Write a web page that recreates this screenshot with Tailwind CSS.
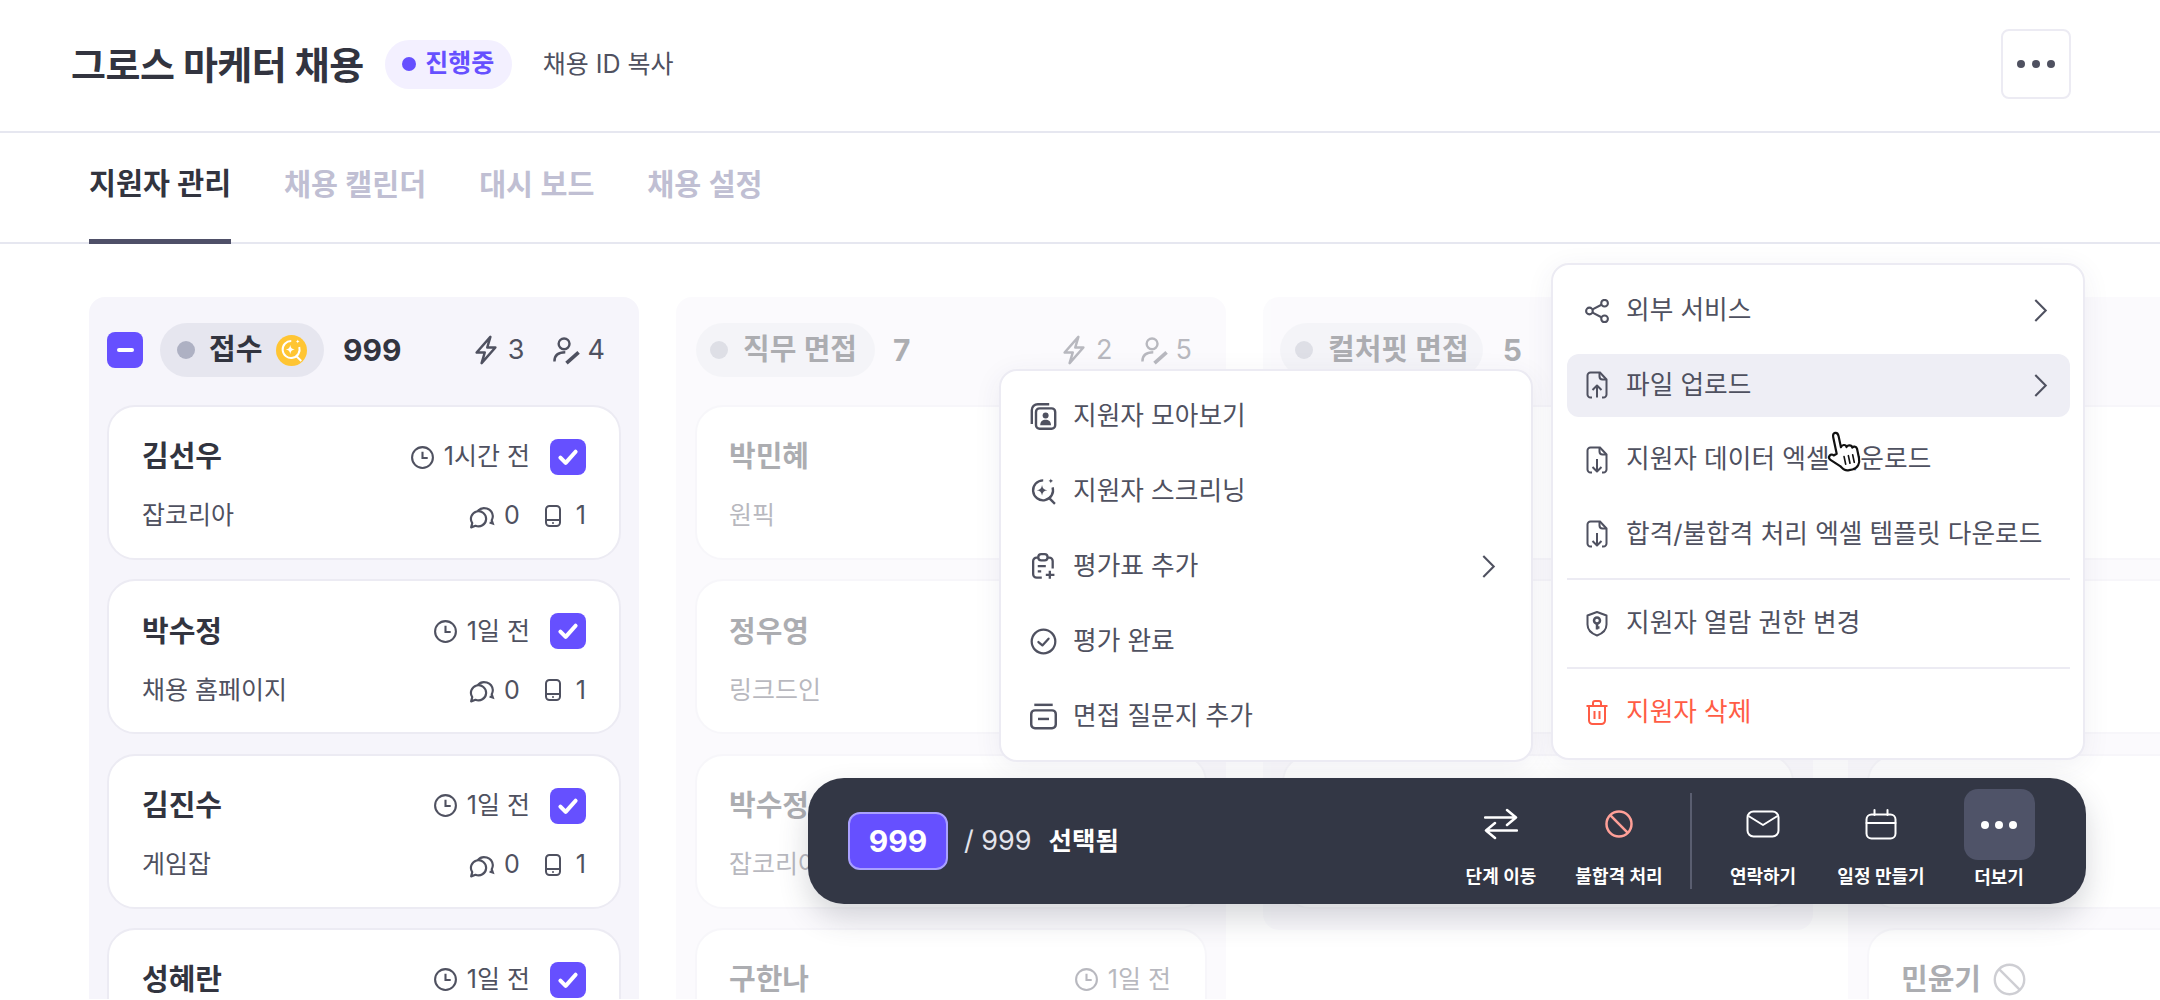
<!DOCTYPE html>
<html lang="ko">
  <head>
    <meta charset="UTF-8" />
    <title>그로스 마케터 채용</title>
    <script src="https://cdn.jsdelivr.net/npm/@tailwindcss/browser@4"></script>
  </head>
  <body class="bg-white font-['Inter','Noto_Sans_CJK_KR',sans-serif] text-[#32343f] overflow-hidden">
    <!-- Icon sprite -->
    <svg class="hidden" xmlns="http://www.w3.org/2000/svg">
      <symbol id="i-clock" viewBox="0 0 24 24"><circle cx="12" cy="12" r="10"/><path d="M12 6.500V12.500H17"/></symbol>
      <symbol id="i-zap" viewBox="0 0 24 24"><path d="M15.500 1.500 4.500 14h6.500l-2.500 8.500L19.500 10h-6.500z" stroke-linejoin="round"/></symbol>
      <symbol id="i-assign" viewBox="0 0 24 24"><circle cx="10" cy="6.500" r="4.500"/><path d="M2 21c0-4.500 3-7.500 9-7.500"/><path d="M12 22.500l10-9" stroke-width="3"/></symbol>
      <symbol id="i-chat" viewBox="0 0 24 24"><path d="M8 7.500A8 8 0 0 1 22 12c0 1.500-.4 2.800-1 4l1 3-3-1"/><path d="M2 22.500l1-4A7 7 0 1 1 6 21z" stroke-linejoin="round"/></symbol>
      <symbol id="i-phone" viewBox="0 0 24 24"><rect x="5" y="2" width="14" height="20" rx="3.500"/><path d="M5 16h14"/><circle cx="12" cy="19" r="1" fill="currentColor" stroke="none"/></symbol>
      <symbol id="i-check" viewBox="0 0 24 24"><path d="M5.500 12.500 10 17l8.500-9.500" stroke-linecap="round" stroke-linejoin="round"/></symbol>
      <symbol id="i-contacts" viewBox="1.500 0.500 21.500 22.500"><rect x="6" y="5" width="16" height="17" rx="3"/><path d="M2.500 18V6.500a5 5 0 0 1 5-5h9.500"/><circle cx="14" cy="11" r="2.500" fill="currentColor" stroke="none"/><path d="M9.500 19c0-3 2-4.500 4.500-4.500s4.500 1.500 4.500 4.500z" fill="currentColor" stroke="none"/></symbol>
      <symbol id="i-ai-search" viewBox="1 0.500 22.500 23"><path d="M12 2.500a8.500 8.500 0 1 0 8 6"/><path d="M16.500 17 22 22.500"/><path d="M11 6.500c.4 2.800 1.700 4.100 4.500 4.500-2.800.4-4.100 1.700-4.500 4.500-.4-2.800-1.700-4.100-4.500-4.500 2.800-.4 4.100-1.700 4.500-4.500z" fill="currentColor" stroke="none"/><path d="M18.500 1c.2 1.200.8 1.800 2 2-1.200.2-1.800.8-2 2-.2-1.200-.8-1.800-2-2 1.200-.2 1.800-.8 2-2z" fill="currentColor" stroke="none"/></symbol>
      <symbol id="i-clip-plus" viewBox="2 0.500 21 23.500"><path d="M8 4.500H6.500a3 3 0 0 0-3 3V19a3 3 0 0 0 3 3H11"/><path d="M16 4.500h1.500a3 3 0 0 1 3 3V14"/><rect x="8" y="1.500" width="8" height="5.500" rx="2.500"/><path d="M7.500 12h7M7.500 16.500h3M18 16v7M14.500 19.500h7.500"/></symbol>
      <symbol id="i-check-circle" viewBox="0 0 24 24"><circle cx="12" cy="12" r="10.500"/><path d="M7.500 12.500 11 15.500l5.500-6" stroke-linecap="round" stroke-linejoin="round"/></symbol>
      <symbol id="i-card-minus" viewBox="1 2 22 21"><path d="M4.500 3h15"/><rect x="2" y="7.500" width="20" height="14.500" rx="3"/><path d="M7.500 14.500h9"/></symbol>
      <symbol id="i-share" viewBox="0.500 0.500 22.500 23"><circle cx="4.500" cy="12" r="3.200"/><circle cx="19" cy="4.500" r="3.200"/><circle cx="19" cy="19.500" r="3.200"/><path d="M7.500 10.500 16 6M7.500 13.500 16 18"/></symbol>
      <symbol id="i-file-up" viewBox="0 0 24 28"><path d="M7 26.500H5.500a3 3 0 0 1-3-3v-19a3 3 0 0 1 3-3h9.500l6.500 7v15a3 3 0 0 1-3 3H17"/><path d="M14.500 2v3.500a3 3 0 0 0 3 3H21"/><path d="M12 26.500V14.500M7.500 19l4.500-4.500 4.500 4.500" stroke-linejoin="round"/></symbol>
      <symbol id="i-file-down" viewBox="0 0 24 28"><path d="M7 26.500H5.500a3 3 0 0 1-3-3v-19a3 3 0 0 1 3-3h9.500l6.500 7v15a3 3 0 0 1-3 3H17"/><path d="M14.500 2v3.500a3 3 0 0 0 3 3H21"/><path d="M12 13v12.500M7.500 21l4.500 4.500 4.500-4.500" stroke-linejoin="round"/></symbol>
      <symbol id="i-shield" viewBox="0 0 24 26"><path d="M12 1.500 21.500 5v9c0 5.500-4 9-9.500 11C6.500 23 2.500 19.500 2.500 14V5z" stroke-linejoin="round"/><circle cx="12" cy="10" r="3" stroke-width="2.500"/><path d="M12 13v6M12 17h2.500" stroke-width="2.500"/></symbol>
      <symbol id="i-trash" viewBox="0 0 24 26"><path d="M1.500 6.500h21M8 6V3.500a2 2 0 0 1 2-2h4a2 2 0 0 1 2 2V6"/><path d="M4 6.500V21a3.500 3.500 0 0 0 3.500 3.500h9A3.500 3.500 0 0 0 20 21V6.500"/><path d="M9.500 11.500v8M14.500 11.500v8"/></symbol>
      <symbol id="i-chevron" viewBox="0 0 14 24"><path d="M2 2l10 10L2 22"/></symbol>
      <symbol id="i-swap" viewBox="0 0 34 32"><path d="M1 9.500h31M23 2l9 7.500-9 7.500M33 22.500H2M11 15l-9 7.500 9 7.500" stroke-linecap="round" stroke-linejoin="round"/></symbol>
      <symbol id="i-ban" viewBox="0 0 28 28"><circle cx="14" cy="14" r="12.500"/><path d="M5.200 5.200 22.800 22.800"/></symbol>
      <symbol id="i-mail" viewBox="0 0 34 28"><rect x="1.500" y="1.500" width="31" height="25" rx="6"/><path d="M2.500 6 17 15 31.500 6" stroke-linejoin="round"/></symbol>
      <symbol id="i-calendar" viewBox="0 0 32 32"><rect x="1.500" y="6.500" width="29" height="24" rx="5"/><path d="M1.500 15h29M9.500 2v5M22.500 2v5" stroke-linecap="round"/></symbol>
    </svg>

    <!-- Page header -->
    <header class="h-[133px] border-b-2 border-[#e6e7f0] flex items-center pl-[71px] pr-[89px] pb-[3px]">
      <h1 class="text-[38px] font-bold tracking-[-0.5px] leading-none pt-[1px]">그로스 마케터 채용</h1>
      <span class="ml-[21px] h-[49px] w-[127px] rounded-full bg-[#f3f0ff] flex items-center justify-center gap-[9px] text-[#6650ff] text-[25px] font-semibold">
        <i class="size-[14px] rounded-full bg-[#6650ff]"></i>진행중
      </span>
      <button class="ml-[31px] pt-[1px] text-[25px] text-[#4f5160]">채용 ID 복사</button>
      <button class="ml-auto size-[70px] rounded-lg border-2 border-[#ecebf3] flex items-center justify-center gap-[7px]">
        <i class="size-2 rounded-full bg-[#4f5160]"></i><i class="size-2 rounded-full bg-[#4f5160]"></i><i class="size-2 rounded-full bg-[#4f5160]"></i>
      </button>
    </header>

    <!-- Tabs -->
    <nav class="h-[111px] border-b-2 border-[#e6e7f0] flex pl-[89px] gap-[53px] text-[29.300px] font-semibold text-[#c0bfd3]">
      <a class="flex items-center -mb-[2px] pb-[5px] w-[142px] whitespace-nowrap border-b-[5px] border-[#4f5068] text-[#32343f]">지원자 관리</a>
      <a class="flex items-center pb-[5px]">채용 캘린더</a>
      <a class="flex items-center pb-[5px]">대시 보드</a>
      <a class="flex items-center pb-[5px]">채용 설정</a>
    </nav>

    <!-- Board -->
    <main class="h-[755px] overflow-hidden flex items-start gap-[37px] pl-[89px] pt-[53px]">
      <!-- 접수 -->
      <section class="w-[550px] shrink-0 h-[800px] rounded-2xl bg-[#f6f5fb] px-[18px] pt-[26px]">
        <div class="h-[54px] mr-[16px] flex items-center">
          <span class="size-9 rounded-lg bg-[#6650ff] flex items-center justify-center"><i class="w-[17px] h-1 rounded-full bg-white"></i></span>
          <span class="ml-[17px] h-[54px] w-[164px] rounded-full bg-[#e6e6ef] flex items-center pl-[17px]">
            <i class="size-[18px] rounded-full bg-[#aeb1c3]"></i>
            <b class="ml-[14px] text-[29px] font-semibold">접수</b>
            <span class="ml-[14px] size-[31px] rounded-full bg-[#ffc533] flex items-center justify-center text-white"><svg class="size-[23px] fill-none stroke-current stroke-2"><use href="#i-ai-search"/></svg></span>
          </span>
          <b class="ml-[19px] text-[30px] font-bold">999</b>
          <span class="ml-auto flex items-center text-[27px] text-[#4f5160]">
            <svg class="size-[30px] fill-none stroke-current stroke-2"><use href="#i-zap"/></svg><span class="ml-[7px]">3</span>
            <svg class="ml-[27px] size-[29px] fill-none stroke-current stroke-2"><use href="#i-assign"/></svg><span class="ml-[7px]">4</span>
          </span>
        </div>
        <div class="mt-[28px] flex flex-col gap-[19.300px]">
          <article class="h-[155px] rounded-[28px] border-2 border-[#ecebf3] bg-white px-[33px] pt-[32px]">
            <div class="h-9 flex items-center"><b class="text-[29px] font-semibold">김선우</b><span class="ml-auto flex items-center gap-[9px] text-[25px] text-[#4f5160]"><svg class="size-[25px] fill-none stroke-current stroke-2"><use href="#i-clock"/></svg>1시간 전</span><span class="ml-[20px] size-9 rounded-lg bg-[#6650ff] flex items-center justify-center text-white"><svg class="size-7 fill-none stroke-current stroke-[3.5]"><use href="#i-check"/></svg></span></div>
            <div class="h-8 mt-[25px] flex items-center text-[25px] text-[#4f5160]"><span>잡코리아</span><span class="ml-auto flex items-center"><svg class="size-[26px] fill-none stroke-current stroke-2"><use href="#i-chat"/></svg><span class="ml-[9px]">0</span><svg class="ml-[21px] size-[24px] fill-none stroke-current stroke-2"><use href="#i-phone"/></svg><span class="ml-[11px]">1</span></span></div>
          </article>
          <article class="h-[155px] rounded-[28px] border-2 border-[#ecebf3] bg-white px-[33px] pt-[32px]">
            <div class="h-9 flex items-center"><b class="text-[29px] font-semibold">박수정</b><span class="ml-auto flex items-center gap-[9px] text-[25px] text-[#4f5160]"><svg class="size-[25px] fill-none stroke-current stroke-2"><use href="#i-clock"/></svg>1일 전</span><span class="ml-[20px] size-9 rounded-lg bg-[#6650ff] flex items-center justify-center text-white"><svg class="size-7 fill-none stroke-current stroke-[3.5]"><use href="#i-check"/></svg></span></div>
            <div class="h-8 mt-[25px] flex items-center text-[25px] text-[#4f5160]"><span>채용 홈페이지</span><span class="ml-auto flex items-center"><svg class="size-[26px] fill-none stroke-current stroke-2"><use href="#i-chat"/></svg><span class="ml-[9px]">0</span><svg class="ml-[21px] size-[24px] fill-none stroke-current stroke-2"><use href="#i-phone"/></svg><span class="ml-[11px]">1</span></span></div>
          </article>
          <article class="h-[155px] rounded-[28px] border-2 border-[#ecebf3] bg-white px-[33px] pt-[32px]">
            <div class="h-9 flex items-center"><b class="text-[29px] font-semibold">김진수</b><span class="ml-auto flex items-center gap-[9px] text-[25px] text-[#4f5160]"><svg class="size-[25px] fill-none stroke-current stroke-2"><use href="#i-clock"/></svg>1일 전</span><span class="ml-[20px] size-9 rounded-lg bg-[#6650ff] flex items-center justify-center text-white"><svg class="size-7 fill-none stroke-current stroke-[3.5]"><use href="#i-check"/></svg></span></div>
            <div class="h-8 mt-[25px] flex items-center text-[25px] text-[#4f5160]"><span>게임잡</span><span class="ml-auto flex items-center"><svg class="size-[26px] fill-none stroke-current stroke-2"><use href="#i-chat"/></svg><span class="ml-[9px]">0</span><svg class="ml-[21px] size-[24px] fill-none stroke-current stroke-2"><use href="#i-phone"/></svg><span class="ml-[11px]">1</span></span></div>
          </article>
          <article class="h-[155px] rounded-[28px] border-2 border-[#ecebf3] bg-white px-[33px] pt-[32px]">
            <div class="h-9 flex items-center"><b class="text-[29px] font-semibold">성혜란</b><span class="ml-auto flex items-center gap-[9px] text-[25px] text-[#4f5160]"><svg class="size-[25px] fill-none stroke-current stroke-2"><use href="#i-clock"/></svg>1일 전</span><span class="ml-[20px] size-9 rounded-lg bg-[#6650ff] flex items-center justify-center text-white"><svg class="size-7 fill-none stroke-current stroke-[3.5]"><use href="#i-check"/></svg></span></div>
          </article>
        </div>
      </section>

      <!-- 직무 면접 (dimmed) -->
      <section class="opacity-40 w-[550px] shrink-0 h-[800px] rounded-2xl bg-[#f6f5fb] px-[19px] pt-[26px]">
        <div class="h-[54px] ml-[1px] mr-[15px] flex items-center">
          <span class="h-[54px] rounded-full bg-[#e6e6ef] flex items-center pl-[14px] pr-[18px]">
            <i class="size-[18px] rounded-full bg-[#aeb1c3]"></i>
            <b class="ml-[15px] text-[29px] font-semibold whitespace-nowrap">직무 면접</b>
          </span>
          <b class="ml-[18px] text-[30px] font-bold">7</b>
          <span class="ml-auto flex items-center text-[27px] text-[#4f5160]">
            <svg class="size-[30px] fill-none stroke-current stroke-2"><use href="#i-zap"/></svg><span class="ml-[7px]">2</span>
            <svg class="ml-[27px] size-[29px] fill-none stroke-current stroke-2"><use href="#i-assign"/></svg><span class="ml-[7px]">5</span>
          </span>
        </div>
        <div class="mt-[28px] flex flex-col gap-[19.300px]">
          <article class="h-[155px] rounded-[28px] border-2 border-[#ecebf3] bg-white px-[32px] pt-[32px]">
            <div class="h-9 flex items-center"><b class="text-[29px] font-semibold">박민혜</b></div>
            <div class="h-8 mt-[25px] flex items-center text-[25px] text-[#4f5160]">원픽</div>
          </article>
          <article class="h-[155px] rounded-[28px] border-2 border-[#ecebf3] bg-white px-[32px] pt-[32px]">
            <div class="h-9 flex items-center"><b class="text-[29px] font-semibold">정우영</b></div>
            <div class="h-8 mt-[25px] flex items-center text-[25px] text-[#4f5160]">링크드인</div>
          </article>
          <article class="h-[155px] rounded-[28px] border-2 border-[#ecebf3] bg-white px-[32px] pt-[32px]">
            <div class="h-9 flex items-center"><b class="text-[29px] font-semibold">박수정</b></div>
            <div class="h-8 mt-[25px] flex items-center text-[25px] text-[#4f5160]">잡코리아</div>
          </article>
          <article class="h-[155px] rounded-[28px] border-2 border-[#ecebf3] bg-white pl-[32px] pr-[34px] pt-[32px]">
            <div class="h-9 flex items-center"><b class="text-[29px] font-semibold">구한나</b><span class="ml-auto flex items-center gap-[9px] text-[25px] text-[#4f5160]"><svg class="size-[25px] fill-none stroke-current stroke-2"><use href="#i-clock"/></svg>1일 전</span></div>
          </article>
        </div>
      </section>

      <!-- 컬처핏 면접 (dimmed) -->
      <section class="opacity-40 w-[550px] shrink-0 rounded-2xl bg-[#f6f5fb] px-[19px] pt-[26px] pb-[21px]">
        <div class="h-[54px] -ml-[2px] flex items-center">
          <span class="h-[54px] rounded-full bg-[#e6e6ef] flex items-center pl-[15px] pr-[14px]">
            <i class="size-[18px] rounded-full bg-[#aeb1c3]"></i>
            <b class="ml-[15px] text-[29px] font-semibold whitespace-nowrap">컬처핏 면접</b>
          </span>
          <b class="ml-[20px] text-[30px] font-bold">5</b>
        </div>
        <div class="mt-[28px] flex flex-col gap-[19.300px]">
          <article class="h-[155px] rounded-[28px] border-2 border-[#ecebf3] bg-white"></article>
          <article class="h-[155px] rounded-[28px] border-2 border-[#ecebf3] bg-white"></article>
          <article class="h-[155px] rounded-[28px] border-2 border-[#ecebf3] bg-white"></article>
        </div>
      </section>

      <!-- Fourth column (dimmed, runs off the page) -->
      <section class="opacity-40 -ml-[2px] w-[550px] shrink-0 h-[800px] rounded-2xl bg-[#f6f5fb] px-[19px] pt-[108px]">
        <div class="flex flex-col gap-[19.300px]">
          <article class="h-[155px] rounded-[28px] border-2 border-[#ecebf3] bg-white"></article>
          <article class="h-[155px] rounded-[28px] border-2 border-[#ecebf3] bg-white"></article>
          <article class="h-[155px] rounded-[28px] border-2 border-[#ecebf3] bg-white"></article>
          <article class="h-[155px] rounded-[28px] border-2 border-[#ecebf3] bg-white px-[32px] pt-[32px]">
            <div class="h-9 flex items-center gap-[12px]"><b class="text-[29px] font-semibold">민윤기</b><svg class="size-[33px] fill-none stroke-current stroke-2 text-[#868794]"><use href="#i-ban"/></svg></div>
          </article>
        </div>
      </section>
    </main>

    <!-- Stage menu -->
    <div class="absolute left-[999px] top-[369px] w-[534px] h-[393px] rounded-[18px] border-2 border-[#ecebf3] bg-white shadow-[0_6px_28px_rgba(60,60,100,0.07)] py-[8px] pl-[29px] pr-[35px] text-[25.700px] text-[#4f5160]">
      <div class="h-[75px] flex items-center gap-[16px]"><svg class="size-[27px] fill-none stroke-current stroke-2"><use href="#i-contacts"/></svg>지원자 모아보기</div>
      <div class="h-[75px] flex items-center gap-[16px]"><svg class="size-[27px] fill-none stroke-current stroke-2"><use href="#i-ai-search"/></svg>지원자 스크리닝</div>
      <div class="h-[75px] flex items-center gap-[16px]"><svg class="size-[27px] fill-none stroke-current stroke-2"><use href="#i-clip-plus"/></svg>평가표 추가<svg class="ml-auto w-[15px] h-[25px] fill-none stroke-current stroke-2"><use href="#i-chevron"/></svg></div>
      <div class="h-[75px] flex items-center gap-[16px]"><svg class="size-[27px] fill-none stroke-current stroke-2"><use href="#i-check-circle"/></svg>평가 완료</div>
      <div class="h-[75px] flex items-center gap-[16px]"><svg class="size-[27px] fill-none stroke-current stroke-2"><use href="#i-card-minus"/></svg>면접 질문지 추가</div>
    </div>

    <!-- More menu -->
    <div class="absolute left-[1551px] top-[263px] w-[534px] h-[497px] rounded-[18px] border-2 border-[#ecebf3] bg-white shadow-[0_6px_28px_rgba(60,60,100,0.07)] pt-[14px] pl-[14px] pr-[13px] text-[25.700px] text-[#4f5160]">
      <div class="flex flex-col gap-[11.500px]">
        <div class="h-[63px] rounded-xl flex items-center gap-[17px] pl-[18px] pr-[22px]"><svg class="w-[24px] h-[24px] fill-none stroke-current stroke-2"><use href="#i-share"/></svg>외부 서비스<svg class="ml-auto w-[15px] h-[25px] fill-none stroke-current stroke-2"><use href="#i-chevron"/></svg></div>
        <div class="h-[63px] rounded-xl bg-[#eeeef5] flex items-center gap-[17px] pl-[18px] pr-[22px]"><svg class="w-[24px] h-[28px] fill-none stroke-current stroke-2"><use href="#i-file-up"/></svg>파일 업로드<svg class="ml-auto w-[15px] h-[25px] fill-none stroke-current stroke-2"><use href="#i-chevron"/></svg></div>
        <div class="h-[63px] rounded-xl flex items-center gap-[17px] pl-[18px] pr-[22px]"><svg class="w-[24px] h-[28px] fill-none stroke-current stroke-2"><use href="#i-file-down"/></svg>지원자 데이터 엑셀 다운로드</div>
        <div class="h-[63px] rounded-xl flex items-center gap-[17px] pl-[18px]"><svg class="w-[24px] h-[28px] fill-none stroke-current stroke-2"><use href="#i-file-down"/></svg>합격/불합격 처리 엑셀 템플릿 다운로드</div>
      </div>
      <hr class="my-[12px] border-t-2 border-[#ecebf3]" />
      <div class="h-[63px] rounded-xl flex items-center gap-[17px] pl-[18px]"><svg class="w-[24px] h-[27px] fill-none stroke-current stroke-2"><use href="#i-shield"/></svg>지원자 열람 권한 변경</div>
      <hr class="my-[12px] border-t-2 border-[#ecebf3]" />
      <div class="h-[63px] rounded-xl flex items-center gap-[17px] pl-[18px] text-[#ff5c45]"><svg class="w-[24px] h-[27px] fill-none stroke-current stroke-2"><use href="#i-trash"/></svg>지원자 삭제</div>
    </div>

    <!-- Selection bar -->
    <div class="absolute left-[808px] top-[778px] w-[1278px] h-[126px] rounded-[36px] bg-[#333745] shadow-[0_14px_30px_rgba(50,55,70,0.2)] flex items-start pl-[40px] text-white">
      <span class="mt-[34px] w-[100px] h-[58px] rounded-xl border-2 border-[#a9a0ff] bg-[#6650ff] flex items-center justify-center text-[30px] font-bold">999</span>
      <span class="mt-[46px] ml-[16px] text-[27px] text-[#e3e4ec] leading-[34px]">/ 999</span>
      <b class="mt-[46px] ml-[17px] text-[25.500px] font-semibold leading-[34px]">선택됨</b>
      <div class="ml-auto mr-[28px] flex items-start pt-[11px]">
        <div class="w-[118px] flex flex-col items-center gap-[6px]"><span class="size-[70px] flex items-center justify-center"><svg class="w-[34px] h-[32px] fill-none stroke-current stroke-[2.5]"><use href="#i-swap"/></svg></span><span class="text-[18px] font-semibold leading-6">단계 이동</span></div>
        <div class="w-[118px] flex flex-col items-center gap-[6px]"><span class="size-[70px] flex items-center justify-center text-[#ffa098]"><svg class="size-[28px] fill-none stroke-current stroke-[2.5]"><use href="#i-ban"/></svg></span><span class="text-[18px] font-semibold leading-6">불합격 처리</span></div>
        <i class="mx-[12px] mt-[4px] h-[96px] w-[2px] bg-[#5a5e70]"></i>
        <div class="w-[118px] flex flex-col items-center gap-[6px]"><span class="size-[70px] flex items-center justify-center"><svg class="w-[34px] h-[28px] fill-none stroke-current stroke-2"><use href="#i-mail"/></svg></span><span class="text-[18px] font-semibold leading-6">연락하기</span></div>
        <div class="w-[118px] flex flex-col items-center gap-[6px]"><span class="size-[70px] flex items-center justify-center"><svg class="size-[32px] fill-none stroke-current stroke-2"><use href="#i-calendar"/></svg></span><span class="text-[18px] font-semibold leading-6">일정 만들기</span></div>
        <div class="w-[118px] flex flex-col items-center gap-[6px]"><span class="size-[71px] rounded-[14px] bg-[#4f5368] flex items-center justify-center gap-[6px]"><i class="size-2 rounded-full bg-white"></i><i class="size-2 rounded-full bg-white"></i><i class="size-2 rounded-full bg-white"></i></span><span class="text-[18px] font-semibold leading-6">더보기</span></div>
      </div>
    </div>

    <!-- Mouse pointer -->
    <svg class="absolute left-[1824px] top-[429px] w-[40px] h-[44px] -rotate-12" viewBox="0 0 36 40" fill="#fff" stroke="#111" stroke-width="2" stroke-linejoin="round" stroke-linecap="round">
      <path d="M11 21V6c0-5 5-5 5 0v10c1-2 5-2 5 1 1-2 5-1 5 1.500 1-1 4-.5 4 2V29c0 5-3 9-8 9h-3c-4 0-5-2-7-5l-8-8c-2-3 2-6 4-3z"/>
      <path d="M17 25v7M21 25v7M25 25v7" stroke-width="1.500"/>
    </svg>
  </body>
</html>
